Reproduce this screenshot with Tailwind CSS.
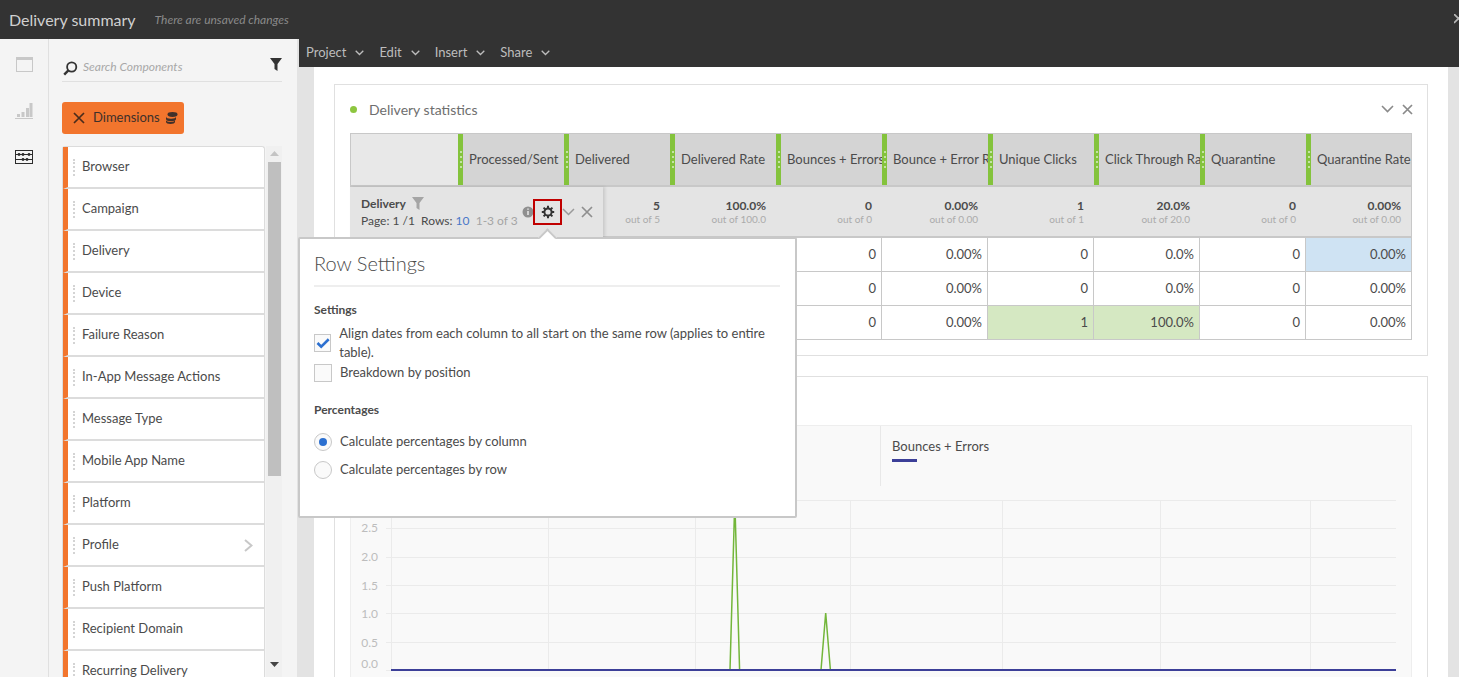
<!DOCTYPE html>
<html>
<head>
<meta charset="utf-8">
<script src="https://cdn.jsdelivr.net/npm/@tailwindcss/browser@4"></script>
</head>
<body class="m-0">
<div class="relative flex h-[677px] w-[1459px] flex-col overflow-hidden bg-white font-['Lato',sans-serif] text-[13px] text-[#4b4b4b]">
  <!-- title bar -->
  <header class="relative flex h-[39px] shrink-0 items-center bg-[#333333] pl-[9px]">
    <span class="text-[16px] text-[#d0d0d0]">Delivery summary</span>
    <span class="ml-[19px] text-[12px] italic text-[#8a8a8a]">There are unsaved changes</span>
    <svg class="absolute left-[1454px] top-[14px]" width="10" height="10" viewBox="0 0 10 10"><path d="M0 0 L9 9 M9 0 L0 9" stroke="#b8b8b8" stroke-width="1.6"/></svg>
  </header>
  <div class="flex min-h-0 flex-1">
    <!-- sidebar -->
    <aside class="flex w-[297px] shrink-0 bg-[#f4f4f4]">
      <nav class="flex w-[49px] shrink-0 flex-col items-center border-r border-[#e0e0e0] pt-[18px]">
        <svg width="17" height="15" viewBox="0 0 17 15"><rect x="0.5" y="0.5" width="16" height="14" fill="none" stroke="#c8c8c8"/><rect x="0" y="0" width="17" height="3" fill="#c8c8c8"/></svg>
        <svg class="mt-[30px]" width="18" height="18" viewBox="0 0 18 18"><path d="M2 12h3v3H2z M6.5 10h3v5h-3z M11 6h3v9h-3z M14.5 1h3v14h-3z" fill="#c8c8c8"/><rect x="0" y="16" width="18" height="1" fill="#c8c8c8"/></svg>
        <svg class="mt-[30px]" width="18" height="14" viewBox="0 0 18 14"><rect x="0.5" y="0.5" width="17" height="13" fill="none" stroke="#2c2c2c"/><path d="M0 4.5h18M0 9.5h18" stroke="#2c2c2c"/><circle cx="4" cy="4.5" r="1.4" fill="#2c2c2c"/><circle cx="8" cy="4.5" r="1.4" fill="#2c2c2c"/><circle cx="14" cy="4.5" r="1.4" fill="#2c2c2c"/><circle cx="8" cy="9.5" r="1.4" fill="#2c2c2c"/><circle cx="12" cy="9.5" r="1.4" fill="#2c2c2c"/></svg>
      </nav>
      <div class="flex min-w-0 flex-1 flex-col pl-[13px] pr-[15px]">
        <div class="mt-[14px] flex h-[29px] items-center border-b border-[#e0e0e0]">
          <svg class="ml-[1px] mt-[3px]" width="15" height="15" viewBox="0 0 15 15"><circle cx="8.7" cy="6" r="4.6" fill="none" stroke="#333" stroke-width="1.8"/><path d="M5.4 9.4 L1.2 13.6" stroke="#333" stroke-width="2.4"/></svg>
          <span class="ml-[5px] text-[12px] italic text-[#a8a8a8]">Search Components</span>
          <svg class="ml-auto mb-[6px]" width="12" height="13" viewBox="0 0 12 13"><path d="M0 0h12L7.5 6v7L4.5 11V6z" fill="#333"/></svg>
        </div>
        <button class="mt-[20px] flex h-[32px] w-[122px] items-center rounded-[3px] bg-[#f2752d] pl-[11px] text-[13px] text-[#40302a]">
          <svg width="12" height="12" viewBox="0 0 12 12"><path d="M1 1 L11 11 M11 1 L1 11" stroke="#4a2c1c" stroke-width="1.7"/></svg>
          <span class="ml-[8px]">Dimensions</span>
          <svg class="ml-[5px]" width="13" height="12" viewBox="0 0 13 12"><ellipse cx="7.5" cy="2.5" rx="5" ry="2.4" fill="#40302a"/><path d="M1 4.5c0 1.3 2 2.3 5 2.3s5-1 5-2.3v2.5c0 1.3-2 2.3-5 2.3S1 8.300 1 7z" fill="#40302a"/><path d="M1 8c0 1 2 2 4.500 2s4.500-1 4.500-2v2c0 1-2 2-4.500 2S1 11 1 10z" fill="#40302a"/></svg>
        </button>
        <div class="mt-[12px] flex min-h-0 flex-1">
          <ul class="w-[203px] shrink-0 self-start rounded-t-[3px] border border-b-0 border-[#dcdcdc] bg-white">
            <li class="flex h-[42px] items-center border-b-2 border-[#dcdcdc] border-l-[5px] border-l-[#f2752d] pl-[5px]"><span class="h-[17px] border-l-2 border-dotted border-[#d4d4d4]"></span><span class="ml-[7px]">Browser</span></li>
            <li class="flex h-[42px] items-center border-b-2 border-[#dcdcdc] border-l-[5px] border-l-[#f2752d] pl-[5px]"><span class="h-[17px] border-l-2 border-dotted border-[#d4d4d4]"></span><span class="ml-[7px]">Campaign</span></li>
            <li class="flex h-[42px] items-center border-b-2 border-[#dcdcdc] border-l-[5px] border-l-[#f2752d] pl-[5px]"><span class="h-[17px] border-l-2 border-dotted border-[#d4d4d4]"></span><span class="ml-[7px]">Delivery</span></li>
            <li class="flex h-[42px] items-center border-b-2 border-[#dcdcdc] border-l-[5px] border-l-[#f2752d] pl-[5px]"><span class="h-[17px] border-l-2 border-dotted border-[#d4d4d4]"></span><span class="ml-[7px]">Device</span></li>
            <li class="flex h-[42px] items-center border-b-2 border-[#dcdcdc] border-l-[5px] border-l-[#f2752d] pl-[5px]"><span class="h-[17px] border-l-2 border-dotted border-[#d4d4d4]"></span><span class="ml-[7px]">Failure Reason</span></li>
            <li class="flex h-[42px] items-center border-b-2 border-[#dcdcdc] border-l-[5px] border-l-[#f2752d] pl-[5px]"><span class="h-[17px] border-l-2 border-dotted border-[#d4d4d4]"></span><span class="ml-[7px]">In-App Message Actions</span></li>
            <li class="flex h-[42px] items-center border-b-2 border-[#dcdcdc] border-l-[5px] border-l-[#f2752d] pl-[5px]"><span class="h-[17px] border-l-2 border-dotted border-[#d4d4d4]"></span><span class="ml-[7px]">Message Type</span></li>
            <li class="flex h-[42px] items-center border-b-2 border-[#dcdcdc] border-l-[5px] border-l-[#f2752d] pl-[5px]"><span class="h-[17px] border-l-2 border-dotted border-[#d4d4d4]"></span><span class="ml-[7px]">Mobile App Name</span></li>
            <li class="flex h-[42px] items-center border-b-2 border-[#dcdcdc] border-l-[5px] border-l-[#f2752d] pl-[5px]"><span class="h-[17px] border-l-2 border-dotted border-[#d4d4d4]"></span><span class="ml-[7px]">Platform</span></li>
            <li class="flex h-[42px] items-center border-b-2 border-[#dcdcdc] border-l-[5px] border-l-[#f2752d] pl-[5px]"><span class="h-[17px] border-l-2 border-dotted border-[#d4d4d4]"></span><span class="ml-[7px]">Profile</span><svg class="ml-auto mr-[11px]" width="9" height="13" viewBox="0 0 9 13"><path d="M1 1 L7.500 6.500 L1 12" fill="none" stroke="#c8c8c8" stroke-width="2"/></svg></li>
            <li class="flex h-[42px] items-center border-b-2 border-[#dcdcdc] border-l-[5px] border-l-[#f2752d] pl-[5px]"><span class="h-[17px] border-l-2 border-dotted border-[#d4d4d4]"></span><span class="ml-[7px]">Push Platform</span></li>
            <li class="flex h-[42px] items-center border-b-2 border-[#dcdcdc] border-l-[5px] border-l-[#f2752d] pl-[5px]"><span class="h-[17px] border-l-2 border-dotted border-[#d4d4d4]"></span><span class="ml-[7px]">Recipient Domain</span></li>
            <li class="flex h-[42px] items-center border-b-2 border-[#dcdcdc] border-l-[5px] border-l-[#f2752d] pl-[5px]"><span class="h-[17px] border-l-2 border-dotted border-[#d4d4d4]"></span><span class="ml-[7px]">Recurring Delivery</span></li>
          </ul>
          <div class="ml-[1px] flex w-[16px] flex-col items-center bg-[#f0f0f0] pt-[5px]">
            <svg width="9" height="6" viewBox="0 0 9 6"><path d="M4.500 0 L9 5 H0z" fill="#c4c4c4"/></svg>
            <div class="mt-[5px] h-[314px] w-[13px] bg-[#bfbfbf]"></div>
            <svg class="mt-[186px]" width="9" height="6" viewBox="0 0 9 6"><path d="M0 0 H9 L4.500 5z" fill="#444"/></svg>
          </div>
        </div>
      </div>
    </aside>
    <!-- main column -->
    <div class="flex min-w-0 flex-1 flex-col">
      <div class="flex h-[28px] shrink-0 items-center gap-[15px] border-l-2 border-[#e3e3e3] bg-[#333333] pl-[7px] text-[13px] text-[#bdbdbd]">
        <span class="flex items-center gap-[9px]">Project<svg width="9" height="6" viewBox="0 0 9 6"><path d="M0.700 0.700 L4.500 4.500 L8.300 0.700" fill="none" stroke="#bdbdbd" stroke-width="1.300"/></svg></span>
        <span class="flex items-center gap-[9px]">Edit<svg width="9" height="6" viewBox="0 0 9 6"><path d="M0.700 0.700 L4.500 4.500 L8.300 0.700" fill="none" stroke="#bdbdbd" stroke-width="1.300"/></svg></span>
        <span class="flex items-center gap-[9px]">Insert<svg width="9" height="6" viewBox="0 0 9 6"><path d="M0.700 0.700 L4.500 4.500 L8.300 0.700" fill="none" stroke="#bdbdbd" stroke-width="1.300"/></svg></span>
        <span class="flex items-center gap-[9px]">Share<svg width="9" height="6" viewBox="0 0 9 6"><path d="M0.700 0.700 L4.500 4.500 L8.300 0.700" fill="none" stroke="#bdbdbd" stroke-width="1.300"/></svg></span>
      </div>
      <div class="flex min-h-0 flex-1 overflow-hidden bg-[#e3e3e3] pl-[17px] pr-[11px]">
        <main class="min-h-0 flex-1 overflow-hidden bg-white pl-[20px] pt-[17px]">
          <!-- card 1 -->
          <section class="h-[272px] w-[1094px] border border-[#e0e0e0] bg-white px-[15px]">
            <div class="flex h-[48px] items-center">
              <span class="ml-[0px] h-[7px] w-[7px] rounded-full bg-[#8dc63f]"></span>
              <span class="ml-[12px] text-[14px] text-[#6e6e6e]">Delivery statistics</span>
              <svg class="ml-auto" width="13" height="8" viewBox="0 0 13 8"><path d="M1 1 L6.500 6.500 L12 1" fill="none" stroke="#8a8a8a" stroke-width="1.600"/></svg>
              <svg class="ml-[8px] mr-[-1px]" width="11" height="11" viewBox="0 0 11 11"><path d="M1 1 L10 10 M10 1 L1 10" stroke="#8a8a8a" stroke-width="1.700"/></svg>
            </div>
            <div class="grid w-[1062px] grid-cols-[108px_repeat(9,106px)] grid-rows-[54px_51px_34px_34px_34px] text-[#4b4b4b]">
              <!-- header -->
              <div class="border border-b-2 border-[#c8c8c8] border-r-0 bg-[#e8e8e8]"></div>
              <div class="flex items-center overflow-hidden whitespace-nowrap border-y border-b-2 border-[#c8c8c8] bg-[#d4d4d4]"><span class="flex h-full w-[5px] shrink-0 flex-col items-center justify-center gap-[3px] bg-[#84c33c]"><i class="h-[2px] w-[2px] rounded-full bg-white/70"></i><i class="h-[2px] w-[2px] rounded-full bg-white/70"></i><i class="h-[2px] w-[2px] rounded-full bg-white/70"></i><i class="h-[2px] w-[2px] rounded-full bg-white/70"></i></span><span class="ml-[6px]">Processed/Sent</span></div>
              <div class="flex items-center overflow-hidden whitespace-nowrap border-y border-b-2 border-[#c8c8c8] bg-[#d4d4d4]"><span class="flex h-full w-[5px] shrink-0 flex-col items-center justify-center gap-[3px] bg-[#84c33c]"><i class="h-[2px] w-[2px] rounded-full bg-white/70"></i><i class="h-[2px] w-[2px] rounded-full bg-white/70"></i><i class="h-[2px] w-[2px] rounded-full bg-white/70"></i><i class="h-[2px] w-[2px] rounded-full bg-white/70"></i></span><span class="ml-[6px]">Delivered</span></div>
              <div class="flex items-center overflow-hidden whitespace-nowrap border-y border-b-2 border-[#c8c8c8] bg-[#d4d4d4]"><span class="flex h-full w-[5px] shrink-0 flex-col items-center justify-center gap-[3px] bg-[#84c33c]"><i class="h-[2px] w-[2px] rounded-full bg-white/70"></i><i class="h-[2px] w-[2px] rounded-full bg-white/70"></i><i class="h-[2px] w-[2px] rounded-full bg-white/70"></i><i class="h-[2px] w-[2px] rounded-full bg-white/70"></i></span><span class="ml-[6px]">Delivered Rate</span></div>
              <div class="flex items-center overflow-hidden whitespace-nowrap border-y border-b-2 border-[#c8c8c8] bg-[#d4d4d4]"><span class="flex h-full w-[5px] shrink-0 flex-col items-center justify-center gap-[3px] bg-[#84c33c]"><i class="h-[2px] w-[2px] rounded-full bg-white/70"></i><i class="h-[2px] w-[2px] rounded-full bg-white/70"></i><i class="h-[2px] w-[2px] rounded-full bg-white/70"></i><i class="h-[2px] w-[2px] rounded-full bg-white/70"></i></span><span class="ml-[6px]">Bounces + Errors</span></div>
              <div class="flex items-center overflow-hidden whitespace-nowrap border-y border-b-2 border-[#c8c8c8] bg-[#d4d4d4]"><span class="flex h-full w-[5px] shrink-0 flex-col items-center justify-center gap-[3px] bg-[#84c33c]"><i class="h-[2px] w-[2px] rounded-full bg-white/70"></i><i class="h-[2px] w-[2px] rounded-full bg-white/70"></i><i class="h-[2px] w-[2px] rounded-full bg-white/70"></i><i class="h-[2px] w-[2px] rounded-full bg-white/70"></i></span><span class="ml-[6px]">Bounce + Error Rate</span></div>
              <div class="flex items-center overflow-hidden whitespace-nowrap border-y border-b-2 border-[#c8c8c8] bg-[#d4d4d4]"><span class="flex h-full w-[5px] shrink-0 flex-col items-center justify-center gap-[3px] bg-[#84c33c]"><i class="h-[2px] w-[2px] rounded-full bg-white/70"></i><i class="h-[2px] w-[2px] rounded-full bg-white/70"></i><i class="h-[2px] w-[2px] rounded-full bg-white/70"></i><i class="h-[2px] w-[2px] rounded-full bg-white/70"></i></span><span class="ml-[6px]">Unique Clicks</span></div>
              <div class="flex items-center overflow-hidden whitespace-nowrap border-y border-b-2 border-[#c8c8c8] bg-[#d4d4d4]"><span class="flex h-full w-[5px] shrink-0 flex-col items-center justify-center gap-[3px] bg-[#84c33c]"><i class="h-[2px] w-[2px] rounded-full bg-white/70"></i><i class="h-[2px] w-[2px] rounded-full bg-white/70"></i><i class="h-[2px] w-[2px] rounded-full bg-white/70"></i><i class="h-[2px] w-[2px] rounded-full bg-white/70"></i></span><span class="ml-[6px]">Click Through Rate</span></div>
              <div class="flex items-center overflow-hidden whitespace-nowrap border-y border-b-2 border-[#c8c8c8] bg-[#d4d4d4]"><span class="flex h-full w-[5px] shrink-0 flex-col items-center justify-center gap-[3px] bg-[#84c33c]"><i class="h-[2px] w-[2px] rounded-full bg-white/70"></i><i class="h-[2px] w-[2px] rounded-full bg-white/70"></i><i class="h-[2px] w-[2px] rounded-full bg-white/70"></i><i class="h-[2px] w-[2px] rounded-full bg-white/70"></i></span><span class="ml-[6px]">Quarantine</span></div>
              <div class="flex items-center overflow-hidden whitespace-nowrap border-y border-r border-b-2 border-[#c8c8c8] bg-[#d4d4d4]"><span class="flex h-full w-[5px] shrink-0 flex-col items-center justify-center gap-[3px] bg-[#84c33c]"><i class="h-[2px] w-[2px] rounded-full bg-white/70"></i><i class="h-[2px] w-[2px] rounded-full bg-white/70"></i><i class="h-[2px] w-[2px] rounded-full bg-white/70"></i><i class="h-[2px] w-[2px] rounded-full bg-white/70"></i></span><span class="ml-[6px]">Quarantine Rate</span></div>
              <!-- summary -->
              <div class="bg-[#e4e4e4]"></div>
              <div class="flex flex-col items-end justify-center border-b-2 border-[#c8c8c8] bg-[#e4e4e4] pr-[10px]"><b class="text-[12px] leading-[15px]">5</b><span class="text-[10px] leading-[12px] text-[#ababab]">out of 5</span></div>
              <div class="flex flex-col items-end justify-center border-b-2 border-[#c8c8c8] bg-[#e4e4e4] pr-[10px]"><b class="text-[12px] leading-[15px]">5</b><span class="text-[10px] leading-[12px] text-[#ababab]">out of 5</span></div>
              <div class="flex flex-col items-end justify-center border-b-2 border-[#c8c8c8] bg-[#e4e4e4] pr-[10px]"><b class="text-[12px] leading-[15px]">100.0%</b><span class="text-[10px] leading-[12px] text-[#ababab]">out of 100.0</span></div>
              <div class="flex flex-col items-end justify-center border-b-2 border-[#c8c8c8] bg-[#e4e4e4] pr-[10px]"><b class="text-[12px] leading-[15px]">0</b><span class="text-[10px] leading-[12px] text-[#ababab]">out of 0</span></div>
              <div class="flex flex-col items-end justify-center border-b-2 border-[#c8c8c8] bg-[#e4e4e4] pr-[10px]"><b class="text-[12px] leading-[15px]">0.00%</b><span class="text-[10px] leading-[12px] text-[#ababab]">out of 0.00</span></div>
              <div class="flex flex-col items-end justify-center border-b-2 border-[#c8c8c8] bg-[#e4e4e4] pr-[10px]"><b class="text-[12px] leading-[15px]">1</b><span class="text-[10px] leading-[12px] text-[#ababab]">out of 1</span></div>
              <div class="flex flex-col items-end justify-center border-b-2 border-[#c8c8c8] bg-[#e4e4e4] pr-[10px]"><b class="text-[12px] leading-[15px]">20.0%</b><span class="text-[10px] leading-[12px] text-[#ababab]">out of 20.0</span></div>
              <div class="flex flex-col items-end justify-center border-b-2 border-[#c8c8c8] bg-[#e4e4e4] pr-[10px]"><b class="text-[12px] leading-[15px]">0</b><span class="text-[10px] leading-[12px] text-[#ababab]">out of 0</span></div>
              <div class="flex flex-col items-end justify-center border-b-2 border-r border-[#c8c8c8] bg-[#e4e4e4] pr-[10px]"><b class="text-[12px] leading-[15px]">0.00%</b><span class="text-[10px] leading-[12px] text-[#ababab]">out of 0.00</span></div>
              <!-- row 1 -->
              <div class="col-span-4 border-b border-[#c8c8c8]"></div>
              <div class="flex items-center justify-end border-x border-b border-[#c8c8c8] pr-[5px]">0</div>
              <div class="flex items-center justify-end border-r border-b border-[#c8c8c8] pr-[5px]">0.00%</div>
              <div class="flex items-center justify-end border-r border-b border-[#c8c8c8] pr-[5px]">0</div>
              <div class="flex items-center justify-end border-r border-b border-[#c8c8c8] pr-[5px]">0.0%</div>
              <div class="flex items-center justify-end border-r border-b border-[#c8c8c8] pr-[5px]">0</div>
              <div class="flex items-center justify-end border-r border-b border-[#c8c8c8] bg-[#cfe3f3] pr-[5px]">0.00%</div>
              <!-- row 2 -->
              <div class="col-span-4 border-b border-[#c8c8c8]"></div>
              <div class="flex items-center justify-end border-x border-b border-[#c8c8c8] pr-[5px]">0</div>
              <div class="flex items-center justify-end border-r border-b border-[#c8c8c8] pr-[5px]">0.00%</div>
              <div class="flex items-center justify-end border-r border-b border-[#c8c8c8] pr-[5px]">0</div>
              <div class="flex items-center justify-end border-r border-b border-[#c8c8c8] pr-[5px]">0.0%</div>
              <div class="flex items-center justify-end border-r border-b border-[#c8c8c8] pr-[5px]">0</div>
              <div class="flex items-center justify-end border-r border-b border-[#c8c8c8] pr-[5px]">0.00%</div>
              <!-- row 3 -->
              <div class="col-span-4 border-b border-[#c8c8c8]"></div>
              <div class="flex items-center justify-end border-x border-b border-[#c8c8c8] pr-[5px]">0</div>
              <div class="flex items-center justify-end border-r border-b border-[#c8c8c8] pr-[5px]">0.00%</div>
              <div class="flex items-center justify-end border-r border-b border-[#c8c8c8] bg-[#d5e8c2] pr-[5px]">1</div>
              <div class="flex items-center justify-end border-r border-b border-[#c8c8c8] bg-[#d5e8c2] pr-[5px]">100.0%</div>
              <div class="flex items-center justify-end border-r border-b border-[#c8c8c8] pr-[5px]">0</div>
              <div class="flex items-center justify-end border-r border-b border-[#c8c8c8] pr-[5px]">0.00%</div>
            </div>
          </section>
          <!-- card 2 -->
          <section class="mt-[20px] h-[400px] w-[1094px] border border-[#e0e0e0] bg-white px-[15px] pt-[48px]">
            <div class="h-[340px] w-[1062px] border border-[#eeeeee] bg-[#f9f9f9]">
              <div class="flex h-[60px]">
                <div class="w-[529px]"></div>
                <div class="h-full border-l border-[#e8e8e8] pl-[11px] pt-[12px]">
                  <div class="text-[13px] leading-[17px] text-[#4b4b4b]">Bounces + Errors</div>
                  <div class="mt-[4px] h-[3px] w-[25px] bg-[#3c3f98]"></div>
                </div>
              </div>
              <svg class="block" width="1060" height="191" viewBox="351 486 1060 191">
                <g stroke="#ebebeb" fill="none">
                  <path d="M351 500.500H1396M386 528.500H1396M386 557.500H1396M386 585.500H1396M386 613.500H1396M386 642.500H1396M386 670.500H391"/>
                  <path d="M391.500 500V670M548.500 500V670M695.500 500V670M850.500 500V670M1002.500 500V670M1160.500 500V670M1310.500 500V670"/>
                </g>
                <g fill="#bdbdbd" font-size="12" text-anchor="end">
                  <text x="378" y="532">2.5</text>
                  <text x="378" y="561">2.0</text>
                  <text x="378" y="590">1.5</text>
                  <text x="378" y="618">1.0</text>
                  <text x="378" y="647">0.5</text>
                  <text x="378" y="668">0.0</text>
                </g>
                <path d="M730 670 L734.800 500 L739.600 670 M821 670 L825.700 613 L830.400 670" fill="none" stroke="#73b63a" stroke-width="1.500"/>
                <path d="M391 670H1396" stroke="#3c3f98" stroke-width="2"/>
              </svg>
            </div>
          </section>
        </main>
      </div>
    </div>
  </div>

  <!-- row-header overlay -->
  <div class="absolute left-[350px] top-[187px] flex h-[50px] w-[253px] flex-col justify-center bg-[#e4e4e4] pl-[11px] shadow-[2px_0_3px_rgba(0,0,0,0.12)]">
    <div class="flex items-center text-[12px] font-bold leading-[16px]">Delivery<svg class="ml-[6px]" width="12" height="13" viewBox="0 0 12 13"><path d="M0 0h12L7.500 6v7L4.500 11V6z" fill="#a5a5a5"/></svg></div>
    <div class="text-[12px] leading-[17px]">Page: 1 /1&nbsp; Rows: <span class="text-[#4a78c8]">10</span>&nbsp; <span class="text-[#a5a5a5]">1-3 of 3</span></div>
    <svg class="absolute left-[172px] top-[19px]" width="12" height="12" viewBox="0 0 12 12"><circle cx="6" cy="6" r="5.500" fill="#8f8f8f"/><path d="M6 5v4M6 2.500v1.200" stroke="#e4e4e4" stroke-width="1.600"/></svg>
    <div class="absolute left-[183px] top-[12px] flex h-[26px] w-[29px] items-center justify-center border-2 border-[#c00000]">
      <svg width="14" height="14" viewBox="0 0 14 14"><circle cx="7" cy="7" r="3.600" fill="none" stroke="#333" stroke-width="2"/><path d="M7 .8V3M7 11v2.200M.8 7H3M11 7h2.200M2.600 2.600l1.600 1.600M9.800 9.800l1.600 1.600M2.600 11.400l1.600-1.600M9.800 4.200l1.600-1.600" stroke="#333" stroke-width="2"/></svg>
    </div>
    <svg class="absolute left-[212px] top-[21px]" width="13" height="8" viewBox="0 0 13 8"><path d="M1 1 L6.500 6.500 L12 1" fill="none" stroke="#9a9a9a" stroke-width="1.500"/></svg>
    <svg class="absolute left-[231px] top-[19px]" width="12" height="12" viewBox="0 0 12 12"><path d="M1 1 L11 11 M11 1 L1 11" stroke="#8f8f8f" stroke-width="1.700"/></svg>
  </div>

  <!-- popover -->
  <div class="absolute left-[298px] top-[237px] h-[281px] w-[499px] rounded-[2px] border-2 border-[#c8c8c8] bg-white pl-[14px] pr-[15px]">
    <div class="absolute left-[241px] top-[-8px] h-[13px] w-[13px] rotate-45 border-l-2 border-t-2 border-[#c8c8c8] bg-white"></div>
    <h2 class="flex h-[48px] items-center border-b-2 border-[#eeeeee] pt-[1px] text-[20px] font-light text-[#4b4b4b]">Row Settings</h2>
    <div class="mt-[15px] text-[12px] font-bold leading-[16px]">Settings</div>
    <div class="mt-[16px] flex h-[18px] items-center"><span class="flex h-[18px] w-[18px] items-center justify-center border border-[#c8c8c8] bg-[#fafafa]"><svg width="14" height="11" viewBox="0 0 14 11"><path d="M1.500 5 L5.200 8.700 L12.700 1.300" fill="none" stroke="#2b6fd0" stroke-width="2.600"/></svg></span><span class="ml-[8px]">Align dates from each column to all start on the same row (applies to entire table).</span></div>
    <div class="mt-[12px] flex h-[18px] items-center"><span class="h-[18px] w-[18px] border border-[#c8c8c8] bg-[#fafafa]"></span><span class="ml-[8px]">Breakdown by position</span></div>
    <div class="mt-[20px] text-[12px] font-bold leading-[16px]">Percentages</div>
    <div class="mt-[15px] flex h-[18px] items-center"><span class="flex h-[18px] w-[18px] items-center justify-center rounded-full border border-[#c8c8c8] bg-[#fafafa]"><i class="h-[8px] w-[8px] rounded-full bg-[#2b6fd0]"></i></span><span class="ml-[8px]">Calculate percentages by column</span></div>
    <div class="mt-[10px] flex h-[18px] items-center"><span class="h-[18px] w-[18px] rounded-full border border-[#c8c8c8] bg-[#fafafa]"></span><span class="ml-[8px]">Calculate percentages by row</span></div>
  </div>
</div>
</body>
</html>
